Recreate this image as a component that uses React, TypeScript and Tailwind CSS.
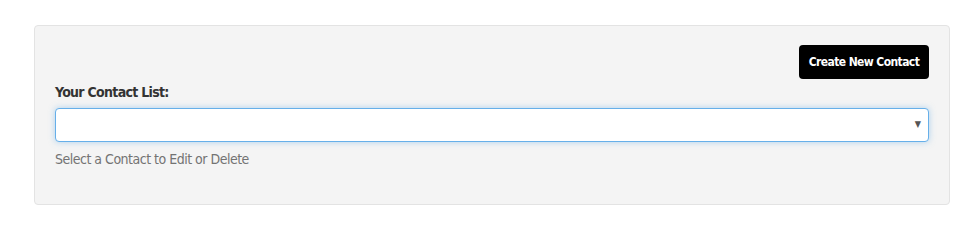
export default function App() {
  return (
    <div
      className="w-[974px] h-[243px] bg-white pt-[25px] pl-[34px]"
      style={{ fontFamily: '"DejaVu Sans Condensed", "Liberation Sans", sans-serif' }}
    >
      {/* Contact panel */}
      <div className="w-[916px] h-[180px] bg-[#f4f4f4] border border-[#e3e3e3] rounded-[4px] px-[20px] pt-[19px]">
        <div className="flex justify-end">
          <button className="h-[34px] w-[130px] bg-black text-white text-[12px] font-bold rounded-[4px] tracking-[-0.6px]">
            Create New Contact
          </button>
        </div>

        <label className="block mt-[3px] text-[14px] font-bold text-[#333] leading-[20px] tracking-[-0.7px]">
          Your Contact List:
        </label>

        <div className="relative mt-[6px]">
          <select className="appearance-none w-full h-[34px] bg-white border border-[#66afe9] rounded-[4px] shadow-[0_0_6px_rgba(102,175,233,0.5)] outline-none px-3 text-[14px]">
            <option></option>
          </select>
          <span className="absolute right-[8px] top-[10px] text-[9px] text-[#555] pointer-events-none">
            ▼
          </span>
        </div>

        <p className="mt-[7px] text-[14px] text-[#737373] leading-[20px] tracking-[-0.5px]">
          Select a Contact to Edit or Delete
        </p>
      </div>
    </div>
  );
}
